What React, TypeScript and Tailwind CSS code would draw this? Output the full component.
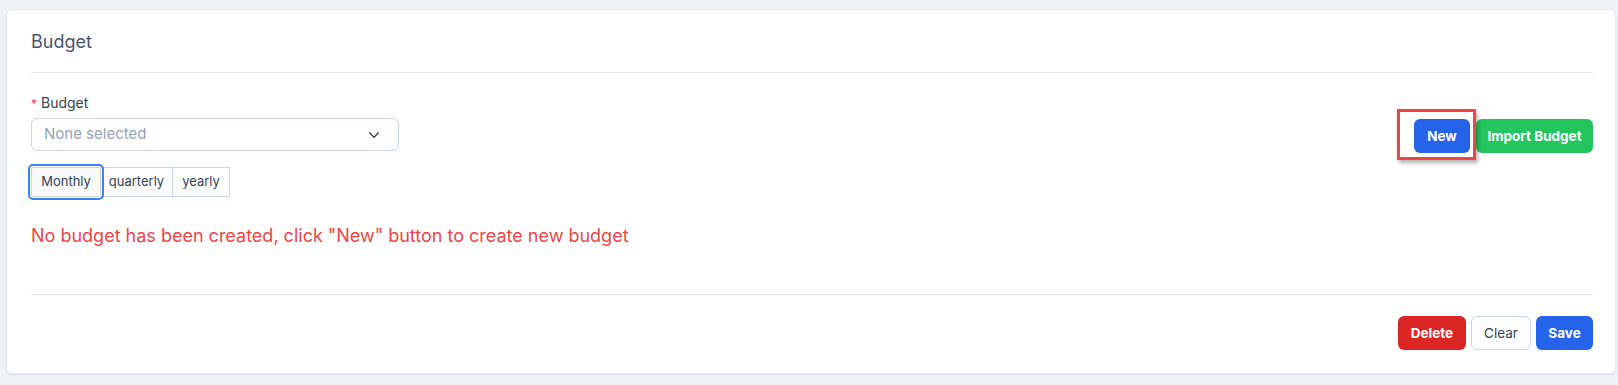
import { ChevronDown } from "lucide-react";

const periods = [
  { label: "Monthly", active: true },
  { label: "quarterly", active: false },
  { label: "yearly", active: false },
];

export default function App() {
  return (
    <div
      className="min-h-[385px] bg-[#eff3f8] pt-[9px] pb-[12px] pl-[6px] pr-[2px]"
      style={{ fontFamily: "Inter, 'Noto Sans', sans-serif" }}
    >
      <div className="rounded-md border border-[#e2e8f0] bg-white pl-6 pr-[22px] shadow-[0_1px_2px_rgba(15,23,42,0.08)]">
        {/* header */}
        <div className="border-b border-[#e5e7eb] pt-[18px] pb-[16px]">
          <h1 className="text-[18px] leading-7 text-[#475569]">Budget</h1>
        </div>

        {/* body */}
        <div className="border-b border-[#e5e7eb] pt-[20px] pb-[46px]">
          <div className="flex items-start justify-between">
            <div className="flex flex-col">
              <label className="mb-1 text-[14px] leading-5 text-[#374151]">
                <span className="mr-1 text-[12px] text-[#ef4444]">*</span>
                Budget
              </label>
              <button className="flex h-[33px] w-[368px] items-center justify-between rounded-md border border-[#cbd5e1] bg-white pl-3 pr-[15px] text-left">
                <span className="text-[15px] text-[#94a3b8]">None selected</span>
                <ChevronDown className="h-[18px] w-[18px] text-[#334155]" strokeWidth={1.75} />
              </button>
              <div className="mt-4 flex">
                {periods.map((p) => (
                  <button
                    key={p.label}
                    className={`h-[30px] border text-[13px] text-[#334155] -ml-px first:ml-0 ${
                      p.active
                        ? "w-[70px] border-[#cbd5e1] bg-[#f8fafc] rounded-[2px] outline-2 outline-offset-[1px] outline-[#3b82f6] relative z-10"
                        : p.label === "quarterly"
                        ? "w-[73px] border-[#cbd5e1] bg-white"
                        : "w-[58px] border-[#cbd5e1] bg-white"
                    }`}
                  >
                    {p.label}
                  </button>
                ))}
              </div>
            </div>

            <div className="mt-[26px] flex items-center gap-[6px]">
              <div className="relative">
                <button className="h-[34px] w-[56px] rounded-md bg-[#2563eb] text-[13.5px] font-bold text-white">
                  New
                </button>
                <div className="pointer-events-none absolute -left-[17px] -top-[10px] -right-[6px] -bottom-[7px] border-[3px] border-[#ef4444] shadow-[2px_3px_4px_rgba(0,0,0,0.3)]" />
              </div>
              <button className="h-[34px] w-[117px] rounded-md bg-[#22c55e] text-[13.5px] font-bold text-white">
                Import Budget
              </button>
            </div>
          </div>

          <p className="mt-[27px] text-[18px] leading-6 text-[#ef4444]">
            No budget has been created, click "New" button to create new budget
          </p>
        </div>

        {/* footer */}
        <div className="flex justify-end gap-[5px] pt-[21px] pb-[23px]">
          <button className="h-[34px] w-[68px] rounded-md bg-[#dc2626] text-[13.5px] font-bold text-white">
            Delete
          </button>
          <button className="h-[34px] w-[60px] rounded-md border border-[#cbd5e1] bg-white text-[13.5px] text-[#374151]">
            Clear
          </button>
          <button className="h-[34px] w-[57px] rounded-md bg-[#2563eb] text-[13.5px] font-bold text-white">
            Save
          </button>
        </div>
      </div>
    </div>
  );
}
